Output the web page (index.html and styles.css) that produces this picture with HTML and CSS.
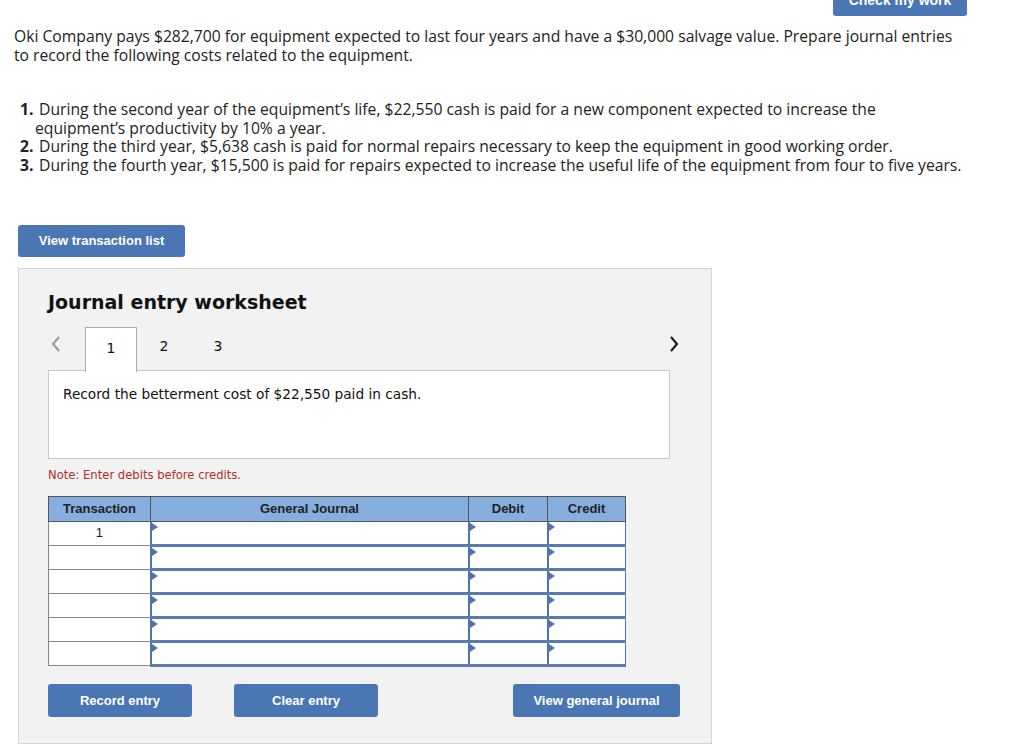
FILE: index.html
```html
<!doctype html>
<html>
    <head>
        <meta charset="utf-8">
        <link rel="stylesheet" href="styles.css">
    </head>
    <body>
        <div class="page">
            <div class="topbar">
                <button class="btn check">Check my work</button>
            </div>

            <p class="intro">Oki Company pays $282,700 for equipment expected to last four years and have a $30,000 salvage value. Prepare journal entries to record the following costs related to the equipment.</p>

            <ol class="items">
                <li><b>1.</b> During the second year of the equipment’s life, $22,550 cash is paid for a new component expected to increase the equipment’s productivity by 10% a year.</li>
                <li><b>2.</b> During the third year, $5,638 cash is paid for normal repairs necessary to keep the equipment in good working order.</li>
                <li><b>3.</b> During the fourth year, $15,500 is paid for repairs expected to increase the useful life of the equipment from four to five years.</li>
            </ol>

            <button class="btn list-btn">View transaction list</button>

            <div class="worksheet">
                <h2>Journal entry worksheet</h2>

                <div class="tabs">
                    <span class="arrow prev">
                        <svg width="12" height="18" viewBox="0 0 12 18"><path d="M9 2 L3 9 L9 16" fill="none" stroke="#999" stroke-width="2"/></svg>
                    </span>
                    <span class="tab active">1</span>
                    <span class="tab">2</span>
                    <span class="tab">3</span>
                    <span class="arrow next">
                        <svg width="12" height="18" viewBox="0 0 12 18"><path d="M3 2 L9 9 L3 16" fill="none" stroke="#111" stroke-width="2"/></svg>
                    </span>
                </div>

                <div class="prompt">Record the betterment cost of $22,550 paid in cash.</div>

                <p class="note">Note: Enter debits before credits.</p>

                <table class="jtable">
                    <tr>
                        <th class="c-tx">Transaction</th>
                        <th class="c-gj">General Journal</th>
                        <th class="c-dr">Debit</th>
                        <th class="c-cr">Credit</th>
                    </tr>
                    <tr><td class="tx">1</td><td class="in"></td><td class="in"></td><td class="in"></td></tr>
                    <tr><td class="tx"></td><td class="in"></td><td class="in"></td><td class="in"></td></tr>
                    <tr><td class="tx"></td><td class="in"></td><td class="in"></td><td class="in"></td></tr>
                    <tr><td class="tx"></td><td class="in"></td><td class="in"></td><td class="in"></td></tr>
                    <tr><td class="tx"></td><td class="in"></td><td class="in"></td><td class="in"></td></tr>
                    <tr><td class="tx"></td><td class="in"></td><td class="in"></td><td class="in"></td></tr>
                </table>

                <div class="actions">
                    <button class="btn act record">Record entry</button>
                    <button class="btn act clear">Clear entry</button>
                    <button class="btn act view">View general journal</button>
                </div>
            </div>
        </div>
    </body>
</html>
```

FILE: styles.css
```css
body {
    margin:0;
    background:#fff;
    color:#222;
    font-family:"Open Sans", Lato, "Liberation Sans", sans-serif;
}

.page {
    width:953px;
    padding-left:14px;
}

.topbar {
    display:flex;
    justify-content:flex-end;
    margin-top:-16px;
}

.btn {
    background:#4a76b4;
    color:#fff;
    border:none;
    border-radius:3px;
    font-family:"Liberation Sans", Arial, sans-serif;
    font-weight:bold;
    font-size:13px;
    cursor:pointer;
}

.check {
    width:134px;
    height:32px;
    font-size:14px;
}

.intro {
    margin:11px 0 0 0;
    font-size:15.7px;
    line-height:19px;
}

.items {
    list-style:none;
    margin:35px 0 0 0;
    padding:0 0 0 21px;
    font-size:15.7px;
    line-height:18.7px;
}

.items li {
    text-indent:-15px;
}

.items b {
    display:inline-block;
    width:15px;
    text-indent:0;
}

.list-btn {
    margin:50px 0 0 4px;
    width:167px;
    height:32px;
    display:block;
}

.worksheet {
    margin:11px 0 0 4px;
    width:663px;
    height:446px;
    padding:14px 0 14px 29px;
    background:#f2f2f2;
    border:1px solid #d4d4d4;
    font-family:"DejaVu Sans", Verdana, sans-serif;
}

.worksheet h2 {
    margin:7px 0 0 0;
    font-size:19px;
    line-height:24px;
    color:#111;
}

.tabs {
    display:flex;
    align-items:stretch;
    width:632px;
    height:44px;
    margin-top:13px;
    position:relative;
    z-index:1;
}

.arrow {
    display:flex;
    align-items:center;
    padding-bottom:10px;
}

.prev {
    width:37px;
    padding-left:2px;
    box-sizing:border-box;
}

.next {
    margin-left:auto;
}

.tab {
    width:54px;
    display:flex;
    align-items:center;
    justify-content:center;
    padding-bottom:6px;
    box-sizing:border-box;
    font-size:14px;
    color:#111;
}

.tab.active {
    width:52px;
    background:#fff;
    border:1px solid #aaa;
    border-bottom:none;
    padding-bottom:4px;
    height:45px;
}

.prompt {
    width:622px;
    height:89px;
    margin-top:-1px;
    background:#fff;
    border:1px solid #c8c8c8;
    padding:15px 0 0 14px;
    box-sizing:border-box;
    font-size:13.7px;
    color:#111;
}

.note {
    margin:9px 0 0 0;
    font-size:11.6px;
    color:#b03028;
}

.jtable {
    margin-top:14px;
    border-collapse:collapse;
    font-family:"Liberation Sans", Arial, sans-serif;
    font-size:13px;
}

.jtable th {
    background:#86aedf;
    border:1px solid #555;
    height:24px;
    padding:0;
    font-weight:bold;
    color:#222;
}

.c-tx { width:101px; }
.c-gj { width:317px; }
.c-dr { width:78px; }
.c-cr { width:77px; }

.jtable td {
    height:21px;
    padding:0;
    background:#fff;
}

.jtable td.tx {
    border:1px solid #888;
    text-align:center;
    vertical-align:top;
    padding-top:3px;
    height:20px;
}

.jtable td.in {
    border-left:2px solid #4e73ad;
    border-right:1px solid #4e73ad;
    border-top:1px solid #9fbde4;
    border-bottom:3px solid #5a7bb0;
    position:relative;
}

.jtable td.in::before {
    content:"";
    position:absolute;
    left:0;
    top:1px;
    border-left:6px solid #4e73ad;
    border-top:4px solid transparent;
    border-bottom:4px solid transparent;
}

.actions {
    display:flex;
    margin-top:17px;
}

.act {
    height:33px;
    width:144px;
}

.clear {
    margin-left:42px;
}

.view {
    width:167px;
    margin-left:135px;
}
```
